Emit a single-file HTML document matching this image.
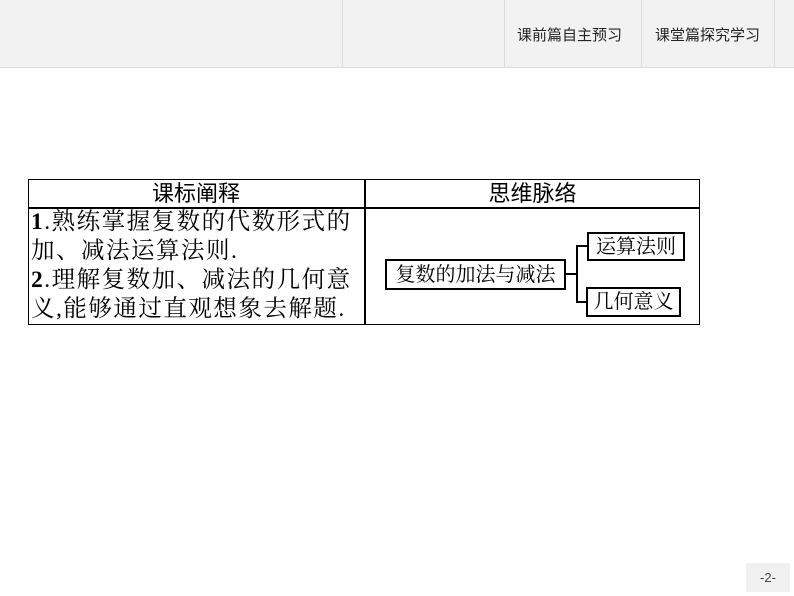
<!DOCTYPE html>
<html><head><meta charset="utf-8"><style>
body{margin:0;width:794px;height:596px;background:#fff;position:relative;overflow:hidden;font-family:"Liberation Serif","Noto Serif CJK SC",serif;}
.hdr{position:absolute;left:0;top:0;width:794px;height:67px;background:#f2f2f2;border-bottom:1px solid #dcdcdc;}
.v{position:absolute;top:0;height:67px;width:1px;background:#dcdcdc;}
.ht{position:absolute;top:24px;font:15px "Liberation Sans","Noto Sans CJK SC",sans-serif;color:#222;}
.a{position:absolute;}
.box{position:absolute;border:2px solid #000;font-size:20px;line-height:24px;text-align:center;box-sizing:border-box;white-space:nowrap}
</style></head><body>
<div class="hdr"></div>
<div class="v" style="left:342px"></div><div class="v" style="left:504px"></div><div class="v" style="left:641px"></div><div class="v" style="left:774px"></div>
<div class="ht" style="left:517px">课前篇自主预习</div>
<div class="ht" style="left:655px">课堂篇探究学习</div>

<div class="a" style="left:28px;top:179px;width:672px;height:146px;border:1.5px solid #000;box-sizing:border-box;"></div>
<div class="a" style="left:28px;top:207px;width:672px;height:1.5px;background:#000"></div>
<div class="a" style="left:364px;top:179px;width:1.5px;height:146px;background:#000"></div>
<div class="a" style="left:28px;top:181px;width:336px;text-align:center;font-size:22px;line-height:26px;font-family:'Liberation Sans','Noto Sans CJK SC',sans-serif">课标阐释</div>
<div class="a" style="left:365px;top:181px;width:335px;text-align:center;font-size:22px;line-height:26px;font-family:'Liberation Sans','Noto Sans CJK SC',sans-serif">思维脉络</div>
<div class="a" style="left:31px;top:208px;width:340px;font-size:23.5px;line-height:29px;letter-spacing:1.5px;white-space:nowrap"><b>1</b>.熟练掌握复数的代数形式的<br>加、减法运算法则.<br><b>2</b>.理解复数加、减法的几何意<br>义,能够通过直观想象去解题.</div>

<div class="box" style="left:385px;top:259px;width:181px;height:31px;padding-top:2px">复数的加法与减法</div>
<div class="box" style="left:587px;top:232px;width:98px;height:29px;padding-top:1px">运算法则</div>
<div class="box" style="left:586px;top:287px;width:95px;height:30px;border-width:2.5px;padding-top:1px">几何意义</div>
<div class="a" style="left:566px;top:273px;width:11px;height:2px;background:#000"></div>
<div class="a" style="left:576px;top:245px;width:2px;height:58px;background:#000"></div>
<div class="a" style="left:576px;top:245px;width:11px;height:2px;background:#000"></div>
<div class="a" style="left:576px;top:301px;width:11px;height:2px;background:#000"></div>

<div class="a" style="left:746px;top:563px;width:44px;height:29px;background:#f0f0f0;font:13px 'Liberation Sans',sans-serif;color:#444;text-align:center;line-height:29px">-2-</div>
</body></html>
